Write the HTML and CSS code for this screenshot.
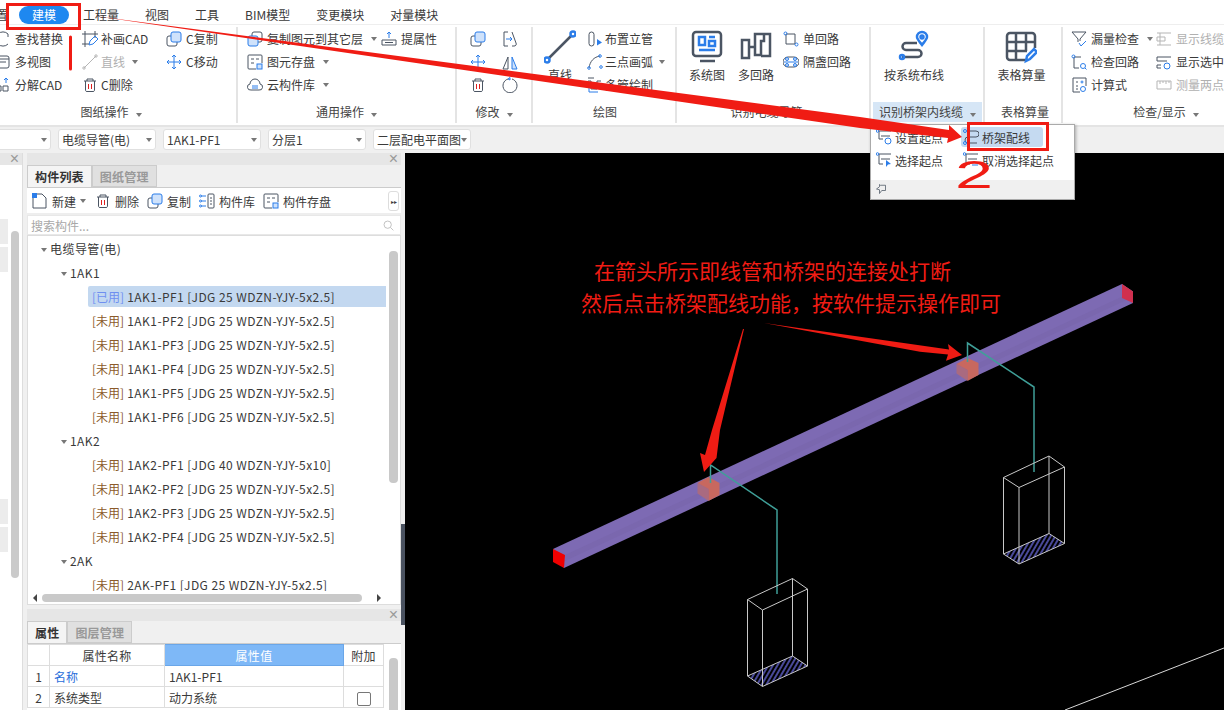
FILE: index.html
```html
<!DOCTYPE html>
<html>
<head>
	<meta charset="UTF-8">
	<title>建模</title>
	<link rel="stylesheet" href="styles.css">
</head>
<body>
	<svg class="defs" width="0" height="0">
		<symbol id="i-find" viewBox="0 0 16 16"><path d="M3 3a7 7 0 0 1 10 0M13 13a7 7 0 0 1-10 0M13 3v3M3 13v-3" class="ln"/></symbol>
		<symbol id="i-view" viewBox="0 0 16 16"><rect x="2" y="2" width="12" height="12" rx="2" class="ln"/><path d="M2 5h12M5 8h6" class="ln"/></symbol>
		<symbol id="i-explode" viewBox="0 0 16 16"><path d="M1 14v-5h5v5zM8 14v-5h5v5z" class="ln"/><path d="M11 6V1M9 3l2-2 2 2" class="bl"/></symbol>
		<symbol id="i-patch" viewBox="0 0 16 16"><path d="M3 0v16M0 3h16M13 0v7M0 13h7" class="ln"/><path d="M7 14l1-4 5-5 3 3-5 5z" class="bl"/></symbol>
		<symbol id="i-line" viewBox="0 0 16 16"><path d="M2 14L14 2" class="gr"/><circle cx="2" cy="14" r="1.2" class="gr"/><circle cx="14" cy="2" r="1.2" class="gr"/></symbol>
		<symbol id="i-trash" viewBox="0 0 16 16"><path d="M2 4h12M5 4V2h6v2M3.500 4v9.500a1.500 1.500 0 0 0 1.500 1h6a1.500 1.500 0 0 0 1.500-1V4" class="ln"/><path d="M6.500 7v5M9.500 7v5" class="rd"/></symbol>
		<symbol id="i-copy" viewBox="0 0 16 16"><rect x="1" y="5" width="10" height="10" rx="2" class="ln"/><rect x="5" y="1" width="10" height="10" rx="2" class="bf"/></symbol>
		<symbol id="i-move" viewBox="0 0 16 16"><path d="M8 1v14M1 8h14M6 3l2-2 2 2M6 13l2 2 2-2M3 6L1 8l2 2M13 6l2 2-2 2" class="bl"/></symbol>
		<symbol id="i-copylayer" viewBox="0 0 16 16"><rect x="5" y="1" width="10" height="10" rx="2" class="ln"/><rect x="1" y="5" width="10" height="10" rx="2" class="bf"/></symbol>
		<symbol id="i-save" viewBox="0 0 16 16"><path d="M9 15H2a1 1 0 0 1-1-1V2a1 1 0 0 1 1-1h12a1 1 0 0 1 1 1v7" class="ln"/><path d="M4 5h3M9 5h3M4 9h3" class="ln"/><rect x="10" y="10" width="5" height="5" class="bf"/></symbol>
		<symbol id="i-cloud" viewBox="0 0 16 16"><path d="M4 13a3 3 0 0 1-1-6 5 5 0 0 1 10 0 3 3 0 0 1-1 6z" class="ln"/><path d="M5 9h6M5 11h6" class="bl"/></symbol>
		<symbol id="i-attr" viewBox="0 0 16 16"><path d="M1 9h14v5H1zM4 11.500h8" class="ln"/><path d="M8 7V1M6 3l2-2 2 2" class="bl"/></symbol>
		<symbol id="i-flip" viewBox="0 0 16 16"><path d="M6 1H2v14h4M10 1l4 11a2 2 0 0 1-2 3h-2" class="ln"/><path d="M4 8h6M8 6l2 2-2 2" class="bl"/></symbol>
		<symbol id="i-mirror" viewBox="0 0 16 16"><path d="M6 3v12H1z" class="ln"/><path d="M10 3v12h5z" class="bf"/></symbol>
		<symbol id="i-rotate" viewBox="0 0 16 16"><path d="M10 2a7 7 0 1 1-4 0" class="ln"/><path d="M6 2l2-1.500V3z" class="bf"/></symbol>
		<symbol id="i-riser" viewBox="0 0 16 16"><rect x="2" y="1" width="5" height="14" rx="2.500" class="ln"/><path d="M10 8l5 3.500-5 3z" class="bs"/></symbol>
		<symbol id="i-arc" viewBox="0 0 16 16"><path d="M2 14C3 7 7 3 13 2" class="ln"/><circle cx="2" cy="14" r="1.300" class="bl"/><circle cx="13" cy="2" r="1.300" class="bl"/><circle cx="14" cy="13" r="1.300" class="bl"/></symbol>
		<symbol id="i-multi" viewBox="0 0 16 16"><path d="M1 1h6M1 4h3v8h6V4h4" class="ln"/><path d="M2 7v8h9" class="bl"/></symbol>
		<symbol id="i-single" viewBox="0 0 16 16"><path d="M3 3h9v10H3z" class="ln"/><circle cx="2.500" cy="2.500" r="1.500" class="bl"/><circle cx="13.500" cy="13.500" r="1.500" class="bl"/></symbol>
		<symbol id="i-shield" viewBox="0 0 16 16"><path d="M5 3h6a4 4 0 0 1 0 10H5a4 4 0 0 1 0-10z" class="ln"/><path d="M1 8h14" class="bl"/><circle cx="4" cy="5" r="1.500" class="bf"/><circle cx="12" cy="5" r="1.500" class="bf"/><circle cx="4" cy="11" r="1.500" class="bf"/><circle cx="12" cy="11" r="1.500" class="bf"/></symbol>
		<symbol id="i-syschart" viewBox="0 0 32 32"><rect x="2" y="1" width="28" height="24" rx="3" class="lt"/><path d="M9 30h15" class="lt"/><path d="M8 6h6v8H8zM18 6h6M18 10h6v5h-6zM8 19h16" class="bt"/></symbol>
		<symbol id="i-loops" viewBox="0 0 32 32"><path d="M2 9h7v18H2zM9 16h6V3h9v7h-3v14h-6v-8M24 3h6v22h-9" class="lt"/></symbol>
		<symbol id="i-route" viewBox="0 0 32 32"><path d="M4 26h16a3.500 3.500 0 0 0 0-7H8a3.500 3.500 0 0 1 0-7h11" class="lt"/><circle cx="4" cy="26" r="2" class="bt"/><path d="M24 14c-3-4-5-6-5-8a5 5 0 0 1 10 0c0 2-2 4-5 8z" class="bt"/><circle cx="24" cy="6" r="1.500" class="bt"/></symbol>
		<symbol id="i-table" viewBox="0 0 32 32"><path d="M21 29H5a3 3 0 0 1-3-3V5a3 3 0 0 1 3-3h22a3 3 0 0 1 3 3v12M2 11h28M2 20h20M11 2v27M21 2v18" class="lt"/><path d="M21 30l1-5 7-7 3 3-7 7z" class="bt"/></symbol>
		<symbol id="i-bigline" viewBox="0 0 32 32"><path d="M5 27L27 5" class="lt"/><circle cx="3" cy="29" r="2.500" class="bt"/><circle cx="29" cy="3" r="2.500" class="bt"/></symbol>
		<symbol id="i-filter" viewBox="0 0 16 16"><path d="M1 1h14L9 8v2M7 11V8L1 1" class="ln"/><path d="M8 12l2 3 5-5" class="bl"/></symbol>
		<symbol id="i-loopcheck" viewBox="0 0 16 16"><path d="M3 3h7M3 3v11h5" class="ln"/><circle cx="2.500" cy="2.500" r="1.500" class="bl"/><circle cx="12" cy="12" r="2.500" class="bl"/><path d="M14 14l1.500 1.500" class="bl"/></symbol>
		<symbol id="i-calc" viewBox="0 0 16 16"><path d="M9 15H2V1h13v8" class="ln"/><path d="M5 5h2M5 9h2M5 12h2" class="ln"/><circle cx="11" cy="5" r="1" class="bl"/><circle cx="12" cy="12" r="2.500" class="bl"/></symbol>
		<symbol id="i-lines" viewBox="0 0 16 16"><path d="M1 2h14M1 14h14M4 2v12M1 6h8v4H1z" class="gr"/></symbol>
		<symbol id="i-selshow" viewBox="0 0 16 16"><path d="M1 3h14M1 7h10M1 11h4M1 14h4M1 3v4M1 11v3" class="ln"/><circle cx="11" cy="12" r="3" class="bl"/></symbol>
		<symbol id="i-measure" viewBox="0 0 16 16"><path d="M1 4h14v8H1zM4 4v3M7 4v2M10 4v3M13 4v2" class="gr"/></symbol>
		<symbol id="i-new" viewBox="0 0 16 16"><path d="M1 5v10h13V5l-4-4H5" class="ln"/><rect x="0" y="0" width="5" height="5" class="bs"/></symbol>
		<symbol id="i-lib" viewBox="0 0 16 16"><rect x="9" y="1" width="6" height="14" rx="1" class="ln"/><path d="M11 5h2M11 8h2M11 11h2" class="ln"/><path d="M2 3h5M2 8h5M2 13h5" class="bl"/><circle cx="1.500" cy="3" r="1" class="bl"/><circle cx="1.500" cy="8" r="1" class="bl"/><circle cx="1.500" cy="13" r="1" class="bl"/></symbol>
		<symbol id="i-setstart" viewBox="0 0 16 16"><path d="M3 2h12M5 7h9M3 2v8h4" class="ln"/><circle cx="1.500" cy="2" r="1.300" class="bl"/><circle cx="12" cy="12" r="3" class="bl"/></symbol>
		<symbol id="i-trayline" viewBox="0 0 16 16"><path d="M4 2h9a2.500 2.500 0 0 1 0 6H5a2.500 2.500 0 0 0 0 6h9" class="ln"/><circle cx="2" cy="2" r="1.500" class="bl"/><circle cx="2" cy="14" r="1.500" class="bl"/></symbol>
		<symbol id="i-pickstart" viewBox="0 0 16 16"><path d="M3 2h12M5 7h9M3 2v10h4" class="ln"/><circle cx="1.500" cy="2" r="1.300" class="bl"/><path d="M10 8l5 4-3 .5L10 15z" class="bs"/></symbol>
		<symbol id="i-unstart" viewBox="0 0 16 16"><path d="M3 2h12M5 7h9M3 2v10h4" class="ln"/><circle cx="1.500" cy="2" r="1.300" class="bl"/><path d="M9 13h6" class="bl"/></symbol>
		<symbol id="i-pin" viewBox="0 0 16 16"><path d="M6 2v3L2 8l4 1v5l3-4h5V3H7z" class="ln"/></symbol>
		<symbol id="i-search" viewBox="0 0 16 16"><circle cx="7" cy="7" r="4.500" class="gr"/><path d="M10.500 10.500L14 14" class="gr"/></symbol>
	</svg>

	<div class="tabs">
		<span class="tab">置</span>
		<span class="tab tab-active">建模</span>
		<span class="tab">工程量</span>
		<span class="tab">视图</span>
		<span class="tab">工具</span>
		<span class="tab">BIM模型</span>
		<span class="tab">变更模块</span>
		<span class="tab">对量模块</span>
	</div>

	<div class="ribbon">
		<div class="group g-paper">
			<div class="group-body cols-paper">
				<div class="col">
					<div class="item"><svg class="ic"><use href="#i-find"/></svg>查找替换</div>
					<div class="item"><svg class="ic"><use href="#i-view"/></svg>多视图</div>
					<div class="item"><svg class="ic"><use href="#i-explode"/></svg>分解CAD</div>
				</div>
				<div class="col">
					<div class="item"><svg class="ic"><use href="#i-patch"/></svg>补画CAD</div>
					<div class="item off"><svg class="ic"><use href="#i-line"/></svg>直线<i class="caret"></i></div>
					<div class="item"><svg class="ic"><use href="#i-trash"/></svg>C删除</div>
				</div>
				<div class="col">
					<div class="item"><svg class="ic"><use href="#i-copy"/></svg>C复制</div>
					<div class="item"><svg class="ic"><use href="#i-move"/></svg>C移动</div>
				</div>
			</div>
			<div class="group-label">图纸操作<i class="caret"></i></div>
		</div>
		<div class="group g-common">
			<div class="group-body cols-common">
				<div class="col">
					<div class="item"><svg class="ic"><use href="#i-copylayer"/></svg>复制图元到其它层<i class="caret"></i></div>
					<div class="item"><svg class="ic"><use href="#i-save"/></svg>图元存盘<i class="caret"></i></div>
					<div class="item"><svg class="ic"><use href="#i-cloud"/></svg>云构件库<i class="caret"></i></div>
				</div>
				<div class="col">
					<div class="item"><svg class="ic"><use href="#i-attr"/></svg>提属性</div>
				</div>
			</div>
			<div class="group-label">通用操作<i class="caret"></i></div>
		</div>
		<div class="group g-modify">
			<div class="group-body cols-modify">
				<div class="col">
					<div class="item"><svg class="ic"><use href="#i-copy"/></svg></div>
					<div class="item"><svg class="ic"><use href="#i-move"/></svg></div>
					<div class="item"><svg class="ic"><use href="#i-trash"/></svg></div>
				</div>
				<div class="col">
					<div class="item"><svg class="ic"><use href="#i-flip"/></svg></div>
					<div class="item"><svg class="ic"><use href="#i-mirror"/></svg></div>
					<div class="item"><svg class="ic"><use href="#i-rotate"/></svg></div>
				</div>
			</div>
			<div class="group-label">修改<i class="caret"></i></div>
		</div>
		<div class="group g-draw">
			<div class="group-body cols-draw">
				<div class="big big-line"><svg class="ic-big"><use href="#i-bigline"/></svg>直线</div>
				<div class="col">
					<div class="item"><svg class="ic"><use href="#i-riser"/></svg>布置立管</div>
					<div class="item"><svg class="ic"><use href="#i-arc"/></svg>三点画弧<i class="caret"></i></div>
					<div class="item"><svg class="ic"><use href="#i-multi"/></svg>多管绘制</div>
				</div>
			</div>
			<div class="group-label">绘图</div>
		</div>
		<div class="group g-cable">
			<div class="group-body cols-cable">
				<div class="big big-sys"><svg class="ic-big"><use href="#i-syschart"/></svg>系统图</div>
				<div class="big big-loop"><svg class="ic-big"><use href="#i-loops"/></svg>多回路</div>
				<div class="col">
					<div class="item"><svg class="ic"><use href="#i-single"/></svg>单回路</div>
					<div class="item"><svg class="ic"><use href="#i-shield"/></svg>隔盏回路</div>
				</div>
			</div>
			<div class="group-label">识别电缆导管<i class="caret"></i></div>
		</div>
		<div class="group g-route">
			<div class="group-body route-body">
				<div class="big"><svg class="ic-big"><use href="#i-route"/></svg>按系统布线</div>
			</div>
			<div class="group-label label-open">识别桥架内线缆<i class="caret"></i></div>
		</div>
		<div class="group g-table">
			<div class="group-body table-body">
				<div class="big"><svg class="ic-big"><use href="#i-table"/></svg>表格算量</div>
			</div>
			<div class="group-label">表格算量</div>
		</div>
		<div class="group g-check">
			<div class="group-body cols-check">
				<div class="col">
					<div class="item"><svg class="ic"><use href="#i-filter"/></svg>漏量检查<i class="caret"></i></div>
					<div class="item"><svg class="ic"><use href="#i-loopcheck"/></svg>检查回路</div>
					<div class="item"><svg class="ic"><use href="#i-calc"/></svg>计算式</div>
				</div>
				<div class="col">
					<div class="item off"><svg class="ic"><use href="#i-lines"/></svg>显示线缆</div>
					<div class="item"><svg class="ic"><use href="#i-selshow"/></svg>显示选中</div>
					<div class="item off"><svg class="ic"><use href="#i-measure"/></svg>测量两点</div>
				</div>
			</div>
			<div class="group-label">检查/显示<i class="caret"></i></div>
		</div>
	</div>

	<div class="combos">
		<div class="combo combo-first"><i class="caret"></i></div>
		<div class="combo">电缆导管(电)<i class="caret"></i></div>
		<div class="combo">1AK1-PF1<i class="caret"></i></div>
		<div class="combo">分层1<i class="caret"></i></div>
		<div class="combo">二层配电平面图<i class="caret"></i></div>
	</div>

	<div class="main">
		<div class="side">
			<div class="pane-head"><span class="close">×</span></div>
			<div class="side-body">
				<div class="side-rows">
					<div class="side-row"></div>
					<div class="side-row"></div>
					<div class="side-row side-row-low"></div>
					<div class="side-row"></div>
				</div>
				<div class="side-scroll"></div>
			</div>
		</div>

		<div class="panels">
			<div class="pane pane-list">
				<div class="pane-head"><span class="close">×</span></div>
				<div class="pane-tabs">
					<span class="pane-tab on">构件列表</span>
					<span class="pane-tab">图纸管理</span>
				</div>
				<div class="list-tools">
					<span class="tool"><svg class="ic"><use href="#i-new"/></svg>新建<i class="caret"></i></span>
					<span class="tool"><svg class="ic"><use href="#i-trash"/></svg>删除</span>
					<span class="tool"><svg class="ic"><use href="#i-copy"/></svg>复制</span>
					<span class="tool"><svg class="ic"><use href="#i-lib"/></svg>构件库</span>
					<span class="tool"><svg class="ic"><use href="#i-save"/></svg>构件存盘</span>
					<span class="tool-more">▸▸</span>
				</div>
				<div class="search">搜索构件...<svg class="ic-search"><use href="#i-search"/></svg></div>
				<div class="tree-box">
					<div class="tree">
						<div class="row lv0"><i class="caret"></i>电缆导管(电)</div>
						<div class="row lv1"><i class="caret"></i>1AK1</div>
						<div class="row leaf sel"><b class="used">[已用]</b> 1AK1-PF1 [JDG 25 WDZN-YJY-5x2.5]</div>
						<div class="row leaf"><b>[未用]</b> 1AK1-PF2 [JDG 25 WDZN-YJY-5x2.5]</div>
						<div class="row leaf"><b>[未用]</b> 1AK1-PF3 [JDG 25 WDZN-YJY-5x2.5]</div>
						<div class="row leaf"><b>[未用]</b> 1AK1-PF4 [JDG 25 WDZN-YJY-5x2.5]</div>
						<div class="row leaf"><b>[未用]</b> 1AK1-PF5 [JDG 25 WDZN-YJY-5x2.5]</div>
						<div class="row leaf"><b>[未用]</b> 1AK1-PF6 [JDG 25 WDZN-YJY-5x2.5]</div>
						<div class="row lv1"><i class="caret"></i>1AK2</div>
						<div class="row leaf"><b>[未用]</b> 1AK2-PF1 [JDG 40 WDZN-YJY-5x10]</div>
						<div class="row leaf"><b>[未用]</b> 1AK2-PF2 [JDG 25 WDZN-YJY-5x2.5]</div>
						<div class="row leaf"><b>[未用]</b> 1AK2-PF3 [JDG 25 WDZN-YJY-5x2.5]</div>
						<div class="row leaf"><b>[未用]</b> 1AK2-PF4 [JDG 25 WDZN-YJY-5x2.5]</div>
						<div class="row lv1"><i class="caret"></i>2AK</div>
						<div class="row leaf"><b>[未用]</b> 2AK-PF1 [JDG 25 WDZN-YJY-5x2.5]</div>
					</div>
					<div class="vbar"></div>
					<div class="hbar"><i class="arrow-l"></i><span class="hthumb"></span><i class="arrow-r"></i></div>
				</div>
			</div>
			<div class="pane pane-props">
				<div class="pane-head"><span class="close">×</span></div>
				<div class="pane-tabs">
					<span class="pane-tab on">属性</span>
					<span class="pane-tab">图层管理</span>
				</div>
				<div class="props">
					<table class="prop-table">
						<tr>
							<th class="c-num"></th>
							<th class="c-name">属性名称</th>
							<th class="c-val">属性值</th>
							<th class="c-add">附加</th>
						</tr>
						<tr>
							<td class="num">1</td>
							<td class="link">名称</td>
							<td>1AK1-PF1</td>
							<td></td>
						</tr>
						<tr>
							<td class="num">2</td>
							<td>系统类型</td>
							<td>动力系统</td>
							<td class="chk"><i class="box"></i></td>
						</tr>
					</table>
					<div class="prop-bar"></div>
				</div>
			</div>
		</div>

		<div class="split"><i class="split-grip"></i></div>

		<div class="canvas">
			<svg class="scene" viewBox="405 153 819 557">
				<defs>
					<pattern id="hatch" width="4" height="4" patternUnits="userSpaceOnUse" patternTransform="rotate(30)">
						<path d="M2 0V4" class="hatch-line"/>
					</pattern>
				</defs>
				<path d="M1224 648L1065 710" class="ground"/>
				<polygon points="553,549 1122,284 1133,291.500 1133,303 564,568" class="tray"/>
				<polygon points="565,555 1133,291.500 1133,297 565,561" class="tray-side"/>
				<polygon points="553,549 565,555 564,568 553,562" class="end-left"/>
				<polygon points="1122,284 1133,291.500 1133,303 1122,298" class="end-right"/>

				<polygon points="697.500,483 708.500,489 708.500,501 697.500,493.500" class="joint-side"/>
				<polygon points="697.500,483 708.500,477 719.500,483 719.500,495 708.500,501 708.500,489" class="joint"/>
				<polygon points="956.500,364 967.500,370 967.500,381 956.500,373.500" class="joint-side"/>
				<polygon points="956.500,364 967.500,358 978.500,363 978.500,375 967.500,381 967.500,370" class="joint"/>

				<polyline points="710.500,483 710.500,465 777,510 777,594" class="wire"/>
				<polyline points="967.500,362 967.500,343 1034,387 1034,472" class="wire"/>

				<polygon points="747.500,676 792.500,656 807.500,666 762.500,686.500" class="hatch"/>
				<path d="M747.500 599.500L792.500 578.500L807.500 589L762.500 610ZM747.500 676L792.500 656L807.500 666L762.500 686.500ZM747.500 599.500V676M792.500 578.500V656M807.500 589V666M762.500 610V686.500" class="cab"/>
				<polygon points="1003.500,554 1049,533.500 1064.500,543.500 1019,564" class="hatch"/>
				<path d="M1003.500 477.500L1049 456L1064.500 467L1019 487.500ZM1003.500 554L1049 533.500L1064.500 543.500L1019 564ZM1003.500 477.500V554M1049 456V533.500M1064.500 467V543.500M1019 487.500V564" class="cab"/>
			</svg>
		</div>
	</div>

	<div class="menu">
		<div class="menu-grid">
			<div class="menu-item"><svg class="ic"><use href="#i-setstart"/></svg>设置起点</div>
			<div class="menu-item menu-on"><svg class="ic"><use href="#i-trayline"/></svg>桥架配线</div>
			<div class="menu-item"><svg class="ic"><use href="#i-pickstart"/></svg>选择起点</div>
			<div class="menu-item menu-cancel"><svg class="ic"><use href="#i-unstart"/></svg>取消选择起点</div>
		</div>
		<div class="menu-foot"><svg class="ic-pin"><use href="#i-pin"/></svg></div>
	</div>

	<svg class="marks" viewBox="0 0 1224 710">
		<rect x="7.500" y="4.500" width="72" height="24" class="mark-box"/>
		<rect x="968.500" y="123.500" width="79" height="26" class="mark-box"/>
		<path d="M70.500 37V69" class="mark-bar"/>
		<polygon points="95,16 860,117 949,130 949,125 962,137 947,143 948,138 860,128" class="mark"/>
		<polygon points="744,329 720,430 716.500,458 704,472 700,453 705,455 712,430 743,329" class="mark"/>
		<polygon points="764,323 949,349.500 948,344 962,355 946,360.700 948,354.500 920,351.700" class="mark"/>
		<text x="594" y="279" class="note">在箭头所示即线管和桥架的连接处打断</text>
		<text x="581" y="311" class="note">然后点击桥架配线功能，按软件提示操作即可</text>
		<text transform="translate(955 188) scale(1.8 1)" class="two">2</text>
	</svg>
</body>
</html>
```

FILE: styles.css
```css
* {
	box-sizing: border-box;
}
html, body {
	margin: 0;
	height: 100%;
}
body {
	width: 1224px;
	height: 710px;
	overflow: hidden;
	position: relative;
	background: #f0f0f0;
	color: #3a3a3a;
	font-family: "Noto Sans CJK SC", "Noto Sans", sans-serif;
	font-size: 12px;
}
.defs {
	position: absolute;
}
.ln, .lt, .bl, .bt, .gr, .rd, .bf {
	fill: none;
	stroke-width: 1;
}
.ln { stroke: #4b5563; }
.lt { stroke: #4b5563; stroke-width: 2.500; }
.bl { stroke: #2b7de9; }
.bt { stroke: #2b7de9; stroke-width: 2.500; }
.gr { stroke: #b5b5b5; }
.rd { stroke: #e02020; }
.bf { stroke: #2b7de9; fill: #cfe2fb; }
.bs { fill: #2b7de9; }

.ic {
	width: 16px;
	height: 16px;
	flex: none;
}
.ic-big {
	width: 32px;
	height: 34px;
	display: block;
	margin-bottom: 2px;
}
.caret {
	display: inline-block;
	width: 0;
	height: 0;
	margin-left: 7px;
	border-left: 3.500px solid transparent;
	border-right: 3.500px solid transparent;
	border-top: 4px solid #777;
}

.tabs {
	height: 25px;
	padding: 6px 0 0 0;
	display: flex;
	gap: 26px;
	background: #fff;
	border-bottom: 1px solid #eee;
}
.tab {
	height: 18px;
	line-height: 18px;
	white-space: nowrap;
}
.tab:first-child {
	margin-left: -4px;
}
.tab-active {
	width: 50px;
	margin: 0 -12px 0 -15px;
	text-align: center;
	color: #fff;
	background: #1e88f0;
	border-radius: 9px;
}

.ribbon {
	height: 102px;
	display: flex;
	background: #fff;
	border-bottom: 2px solid #e4e4e4;
	padding-top: 2px;
}
.group {
	height: 96px;
	display: flex;
	flex-direction: column;
	border-right: 2px solid #e4e4e4;
	white-space: nowrap;
}
.group-body {
	height: 74px;
	display: flex;
}
.group-label {
	height: 20px;
	line-height: 20px;
	margin-top: 1px;
	text-align: center;
	color: #444;
}
.label-open {
	margin: 1px 1px 0 2px;
	background: #d6e6f6;
}
.g-paper { width: 238px; }
.g-paper .group-label { margin-right: 14px; }
.g-common { width: 219px; }
.g-modify { width: 76px; }
.g-draw { width: 144px; }
.g-draw .group-label { padding-left: 2px; }
.g-cable { width: 194px; }
.g-route { width: 114px; }
.g-table { width: 78px; }
.g-table .group-label { padding-left: 4px; }
.g-check { flex: 1; border-right: 0; overflow: hidden; }
.g-check .group-label { width: 206px; }

.col {
	display: flex;
	flex-direction: column;
}
.item {
	height: 23px;
	display: flex;
	align-items: center;
	gap: 4px;
}
.item .caret {
	margin-left: 4px;
}
.off {
	color: #b0b0b0;
}
.big {
	display: flex;
	flex-direction: column;
	align-items: center;
	padding-top: 3px;
}
.route-body {
	padding-left: 13px;
}
.table-body {
	justify-content: center;
	padding-right: 3px;
}
.cols-paper { margin-left: -5px; gap: 0; }
.cols-paper .col:nth-child(1) { width: 87px; }
.cols-paper .col:nth-child(2) { width: 84px; }
.cols-paper .col:nth-child(2) .item { gap: 3px; }
.cols-common { padding-left: 9px; }
.cols-common .col:nth-child(1) { width: 134px; }
.cols-modify { padding-left: 13px; gap: 16px; }
.cols-draw { padding-left: 13px; }
.cols-draw .item { gap: 2px; }
.big-line { width: 28px; margin-right: 13px; }
.cols-cable { padding-left: 12px; }
.big-sys { width: 36px; margin-right: 13px; }
.big-loop { width: 36px; margin-right: 9px; }
.cols-check { padding-left: 8px; }
.cols-check .col:nth-child(1) { width: 87px; }

.combos {
	height: 26px;
	padding-top: 2px;
	display: flex;
	gap: 7px;
}
.combo {
	width: 98px;
	height: 21px;
	line-height: 19px;
	padding-left: 3px;
	position: relative;
	background: #fff;
	border: 1px solid #e0e0e0;
	border-radius: 3px;
	white-space: nowrap;
}
.combo .caret {
	position: absolute;
	right: 3px;
	top: 8px;
	margin: 0;
	border-left-width: 3px;
	border-right-width: 3px;
}
.combo-first {
	width: 60px;
	margin-left: -9px;
}

.main {
	height: 557px;
	display: flex;
}
.side {
	width: 23px;
	display: flex;
	flex-direction: column;
	border-right: 1px solid #ddd;
}
.pane-head {
	height: 12px;
	position: relative;
	background: #e6e6e6;
}
.close {
	position: absolute;
	right: 3px;
	top: -2px;
	line-height: 16px;
	font-family: "Liberation Sans", sans-serif;
	font-size: 16px;
	color: #999;
}
.side-body {
	height: 545px;
	display: flex;
	background: #fff;
}
.side-rows {
	width: 8px;
	padding-top: 54px;
	margin-right: 3px;
}
.side-row {
	height: 25px;
	margin-bottom: 3px;
	background: #ececec;
}
.side-row-low {
	margin-top: 227px;
}
.side-scroll {
	width: 8px;
	height: 347px;
	margin-top: 66px;
	background: #cacaca;
	border-radius: 4px;
}

.panels {
	width: 374px;
	margin-left: 4px;
	display: flex;
	flex-direction: column;
}
.pane-list {
	height: 453px;
}
.pane-props {
	margin-top: 4px;
}
.pane-tabs {
	height: 23px;
	display: flex;
	background: #f0f0f0;
	border-bottom: 1px solid #ccc;
}
.pane-tab {
	padding: 0 7px;
	line-height: 22px;
	font-weight: 700;
	color: #999;
	background: #e0e0e0;
	border: 1px solid #ccc;
	letter-spacing: .2px;
}
.pane-tab.on {
	color: #333;
	background: #f4f4f4;
	border-bottom: 0;
}
.list-tools {
	height: 27px;
	padding: 1px 0 0 5px;
	display: flex;
	align-items: center;
	gap: 8px;
	background: #fff;
	border-bottom: 2px solid #eee;
}
.tool {
	display: flex;
	align-items: center;
	gap: 4px;
}
.tool .caret {
	margin: 0 1px 0 0;
}
.tool-more {
	margin-left: auto;
	margin-right: 2px;
	width: 11px;
	height: 20px;
	line-height: 20px;
	font-size: 6px;
	text-align: center;
	background: #fff;
	border: 1px solid #ddd;
	border-radius: 3px;
	overflow: hidden;
}
.search {
	height: 20px;
	line-height: 20px;
	padding-left: 3px;
	position: relative;
	color: #a8a8a8;
	background: #fff;
	border: 1px solid #e8e8e8;
}
.ic-search {
	position: absolute;
	right: 5px;
	top: 3px;
	width: 13px;
	height: 13px;
}
.tree-box {
	height: 370px;
	position: relative;
	background: #fff;
	border: 1px solid #ddd;
}
.tree {
	height: 355px;
	padding-top: 1px;
	overflow: hidden;
}
.row {
	height: 24px;
	line-height: 24px;
	white-space: nowrap;
	letter-spacing: .44px;
}
.lv0 { padding-left: 13px; }
.lv1 { padding-left: 33px; }
.row .caret {
	margin: 0 3px 1px 0;
	vertical-align: middle;
}
.leaf {
	margin-left: 60px;
	margin-right: 14px;
	padding-left: 4px;
}
.leaf b {
	font-weight: 400;
	letter-spacing: 0;
	color: #8b5a2b;
}
.leaf b.used {
	color: #6f8ff0;
}
.sel {
	background: #c3d8f0;
	height: 21px;
	line-height: 21px;
	margin-top: .5px;
	margin-bottom: 2.500px;
	border-radius: 2px 0 0 2px;
}
.vbar {
	position: absolute;
	right: 2px;
	top: 15px;
	width: 9px;
	height: 232px;
	background: #c9c9c9;
	border-radius: 4px;
}
.hbar {
	height: 14px;
	display: flex;
	align-items: center;
	padding-left: 5px;
	gap: 5px;
}
.hthumb {
	width: 320px;
	height: 8px;
	background: #c9c9c9;
	border-radius: 4px;
}
.arrow-l, .arrow-r {
	width: 0;
	height: 0;
	border-top: 4px solid transparent;
	border-bottom: 4px solid transparent;
}
.arrow-l { border-right: 4px solid #444; }
.arrow-r { border-left: 4px solid #444; margin-left: 10px; }

.props {
	position: relative;
	background: #fff;
	height: 66px;
	overflow: hidden;
}
.prop-table {
	width: 357px;
	table-layout: fixed;
	border-collapse: collapse;
}
.prop-table th, .prop-table td {
	height: 21px;
	padding: 0 4px;
	border: 1px solid #ddd;
	font-weight: 400;
	white-space: nowrap;
}
.prop-table th {
	text-align: center;
	letter-spacing: .3px;
}
.c-num { width: 22px; }
.c-name { width: 115px; }
.c-val { width: 179px; }
.prop-table .c-val {
	color: #fff;
	background: #7eb8f7;
	border-color: #6aa6e8;
}
.prop-table .num {
	text-align: center;
}
.link {
	color: #2a6fdb;
}
.chk {
	text-align: center;
}
.box {
	display: inline-block;
	width: 14px;
	height: 14px;
	vertical-align: middle;
	border: 1px solid #777;
	border-radius: 2px;
}
.prop-bar {
	position: absolute;
	right: 3px;
	top: 14px;
	width: 9px;
	height: 60px;
	background: #c9c9c9;
	border-radius: 4px;
}

.split {
	width: 4px;
	position: relative;
	background: #f0f0f0;
}
.split-grip {
	position: absolute;
	left: 0;
	top: 371px;
	width: 4px;
	height: 101px;
	background: #4a5260;
}
.canvas {
	flex: 1;
	background: #000;
}
.scene {
	display: block;
	width: 819px;
	height: 557px;
}
.ground { stroke: #d8d8d8; fill: none; }
.tray { fill: #7d6ab3; }
.tray-side { fill: #7a67ae; }
.end-left { fill: #f00000; }
.end-right { fill: #d0304f; }
.joint { fill: #c8685f; }
.joint-side { fill: #a96a80; }
.wire { fill: none; stroke: #3f9f98; stroke-width: 1.500; }
.cab { fill: none; stroke: #c8c8c8; stroke-width: 1; }
.hatch { fill: url(#hatch); }
.hatch-line { stroke: #7a7aff; stroke-width: 1.200; }

.menu {
	position: absolute;
	left: 870px;
	top: 124px;
	width: 205px;
	height: 76px;
	background: #fff;
	border: 1px solid #aaa;
	box-shadow: 1px 1px 3px rgba(0, 0, 0, .3);
}
.menu-grid {
	height: 55px;
	padding: 1px 0 0 5px;
	display: grid;
	grid-template-columns: 85px 1fr;
	grid-auto-rows: 22px;
	row-gap: 1px;
}
.menu-item {
	display: flex;
	align-items: center;
	gap: 3px;
}
.menu-on {
	width: 82px;
	height: 20px;
	align-self: center;
	background: #c5daf1;
	border-radius: 3px;
	padding-left: 2px;
}
.menu-cancel {
	padding-left: 2px;
}
.menu-foot {
	height: 19px;
	padding: 3px 0 0 4px;
	background: #f0f0f0;
}
.ic-pin {
	display: block;
	width: 12px;
	height: 12px;
}

.marks {
	position: absolute;
	left: 0;
	top: 0;
	width: 1224px;
	height: 710px;
	pointer-events: none;
}
.mark { fill: #f01c14; }
.mark-box { fill: none; stroke: #f01c14; stroke-width: 3; }
.mark-bar { stroke: #f01c14; stroke-width: 3; stroke-linecap: round; }
.note {
	fill: #f01c14;
	font-size: 21px;
}
.two {
	fill: #f01c14;
	font-family: "Liberation Sans", sans-serif;
	font-size: 38px;
}
```
